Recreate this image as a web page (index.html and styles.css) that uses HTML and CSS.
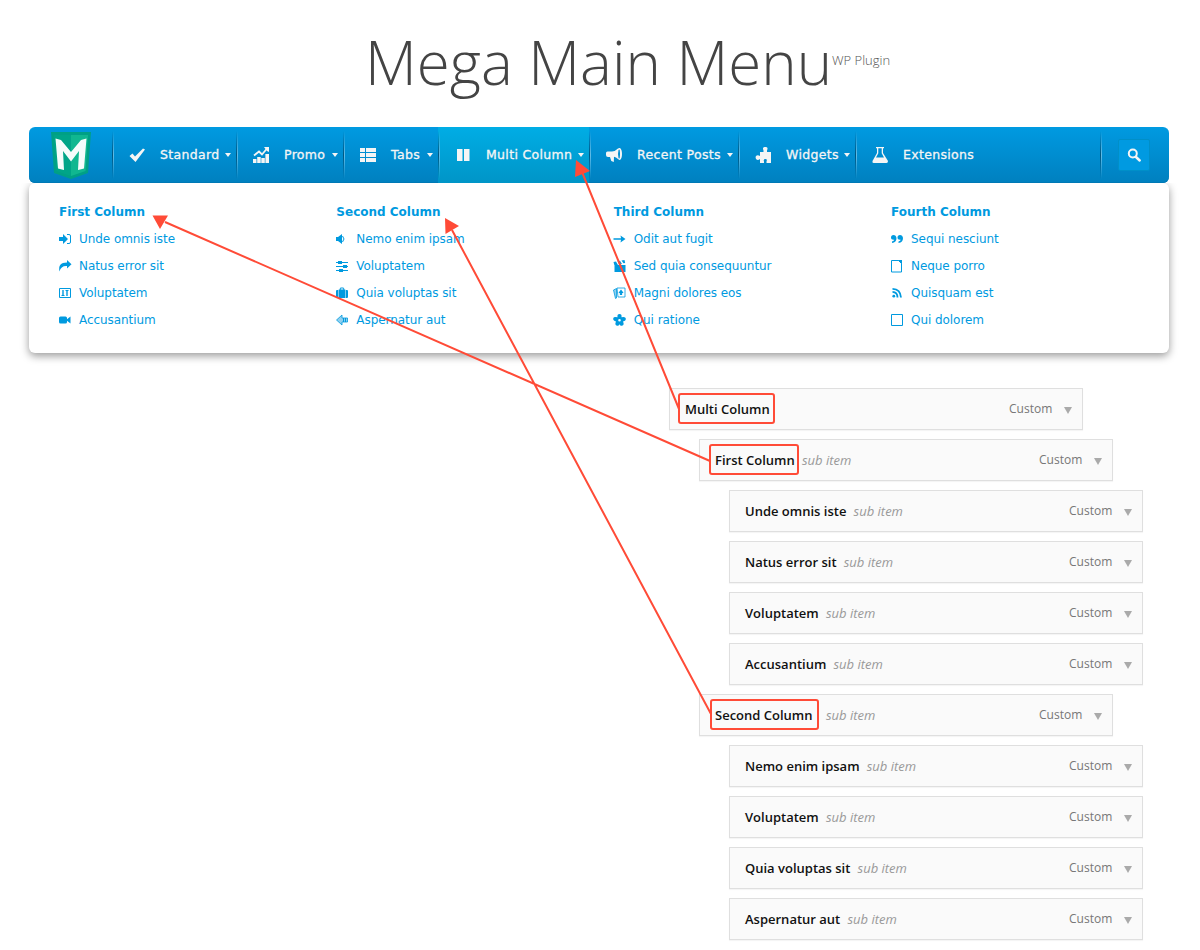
FILE: index.html
```html
<!DOCTYPE html>
<html lang="en">
<head>
<meta charset="utf-8">
<title>Mega Main Menu</title>
<link rel="stylesheet" href="styles.css">
</head>
<body>
<main class="page">
<header class="title"><h1>Mega Main Menu</h1><span class="tag">WP Plugin</span></header>
<nav class="nav">
<a class="logo"><svg width="40" height="48" viewBox="0 0 40 48"><path fill="#00a085" d="M0 0h40l-3 41-17 6-17-6z"/><path fill="#10b790" d="M20 3h17l-2.500 36L20 44z"/><path fill="#00a588" d="M3 3h17v41L5.500 39z"/><path fill="#f5fcfb" d="M4.500 6.500L10 8l10 12L30 8l5.500-1.500L33 36.500l-6 1.500 1-19-8 10.500L12 19l1 19-6-1.500z"/></svg></a>
<a class="item w-standard"><svg class="ico" viewBox="0 0 16 16"><path d="M.5 9l3-2.500L6 9.500 14 1.500l2 1L6.500 15z"/></svg><span>Standard</span><i class="caret"></i></a>
<a class="item w-promo"><svg class="ico" viewBox="0 0 16 16"><path d="M0 12h3.500v4H0zM4.200 10h3.500v6H4.200zM8.300 11h3.500v5H8.300zM12.400 7H16v9h-3.600z"/><path class="line" d="M1 8.500l5-4 3 3 5-6"/><path d="M11 0h5v5l-2-1z"/></svg><span>Promo</span><i class="caret"></i></a>
<a class="item w-tabs"><svg class="ico" viewBox="0 0 16 16"><path d="M0 1h5v4H0zM6 1h10v4H6zM0 6h5v4H0zM6 6h10v4H6zM0 11h5v4H0zM6 11h10v4H6z"/></svg><span>Tabs</span><i class="caret"></i></a>
<a class="item w-multi active"><svg class="ico" viewBox="0 0 16 16"><path d="M2 2h5.500v12H2zM9 2h5.500v12H9z"/></svg><span>Multi Column</span><i class="caret"></i></a>
<a class="item w-posts"><svg class="ico" viewBox="0 0 16 16"><path fill-rule="evenodd" d="M0 6q0-1.500 1.500-1.500H6q3 0 6-3Q13 .8 14 1q2 1.500 2 6t-2 6q-1 0-2-1-2-2-4-2.300L7.800 15 5.300 14 4 10H2Q0 10 0 8zM12.500 3q-1 4 0 8 .700 1 1.200 0 .8-4 0-8-.5-1-1.200 0z"/></svg><span>Recent Posts</span><i class="caret"></i></a>
<a class="item w-widgets"><svg class="ico" viewBox="0 0 16 16"><path d="M5 5h3.500V3.500Q7 .5 9.500 0h1.500Q13.500.5 12 3.500V5h4v11h-4.500v-1.500Q12.500 12 10.500 12 8 12 9 14.500V16H5v-4Q3 13.500 1.500 12.500 0 11 1 9q1.500-1.500 4 0z"/></svg><span>Widgets</span><i class="caret"></i></a>
<a class="item w-ext"><svg class="ico" viewBox="0 0 16 16"><path fill-rule="evenodd" d="M4 0h8v1.200h-1V6l5 8q0 2-1.500 2h-13Q0 16 .5 14L5 6V1.200H4zM6.300 1.200v5L4 10.500h8L9.700 6.200v-5z"/></svg><span>Extensions</span></a>
<div class="search"><a class="search-btn"><svg width="16" height="16" viewBox="0 0 16 16"><circle cx="6.800" cy="6.500" r="4" fill="none" stroke="#f5f5f5" stroke-width="2"/><path d="M10 10l3.700 3.500" stroke="#f5f5f5" stroke-width="2.500" stroke-linecap="round"/></svg></a></div>
</nav>
<section class="panel">
<div class="col"><h2>First Column</h2>
<a><svg viewBox="0 0 12 12"><path d="M0 4h4V1l5 5-5 5V8H0z"/><path class="thin" d="M8 1.500h2q1.500 0 1.500 1.500v6q0 1.500-1.500 1.500H8"/></svg>Unde omnis iste</a>
<a><svg viewBox="0 0 12 12"><path d="M.5 11.500Q-1.500 2.500 8 2.500V0l4.500 4.300L8 8.500V6Q2 5.500.5 11.500z"/></svg>Natus error sit</a>
<a><svg viewBox="0 0 12 12"><path class="thin" d="M.5 1.500h11v9H.5zM2.500 8.500h3M6.500 3.500h3"/><path d="M3.300 3h1.400v6H3.300zM7.300 3h1.400v6H7.300z"/></svg>Voluptatem</a>
<a><svg viewBox="0 0 12 12"><rect y="2.500" width="8" height="7" rx="1.500"/><path d="M7 6l4.500-3.500v7z"/></svg>Accusantium</a></div>
<div class="col"><h2>Second Column</h2>
<a><svg viewBox="0 0 12 12"><path d="M0 4h2l4-3v10L2 8H0z"/><path class="thin" d="M6.500 3q3 3 0 6"/></svg>Nemo enim ipsam</a>
<a><svg viewBox="0 0 12 12"><path class="thin" d="M0 2.500h12M0 6.500h12M0 10.500h12"/><path d="M2 1h4v3H2zM7 5h4v3H7zM3 9h4v3H3z"/></svg>Voluptatem</a>
<a><svg viewBox="0 0 12 12"><path fill-rule="evenodd" d="M2.700 2.500h1Q3.500.5 5 .5h2q1.500 0 1.300 2h1v8.500H2.700zM4.700 1.500v1h2.600v-1zM1 3h1.200v8H1Q0 11 0 10V4q0-1 1-1zM9.800 3H11q1 0 1 1v6q0 1-1 1H9.800z"/></svg>Quia voluptas sit</a>
<a><svg viewBox="0 0 12 12"><path class="soft" d="M.5 6L6 1v3h5.500v4H6v3z"/><path class="thin" d="M7.500 4v4M9.500 4v4"/></svg>Aspernatur aut</a></div>
<div class="col"><h2>Third Column</h2>
<a><svg viewBox="0 0 12 12"><path d="M0 5.300h7.500L7 2.500 12 6 7 9.500l.5-2.700H0z"/></svg>Odit aut fugit</a>
<a><svg viewBox="0 0 12 12"><path d="M1 5h11v7H1zM0 2l2.500-.5L4.500 5H.8zM4 1.200l2.500-.5 2 3.300-2.500.7zM8 .5l3-.5.7 3-1.700.3z"/></svg>Sed quia consequuntur</a>
<a><svg viewBox="0 0 12 12"><path class="soft" d="M0 3l3-1.500v9.500l-1 .5z"/><path class="card" d="M3.500 1h8v9h-7z"/><path d="M7.500 2.500l2.500 3.300-1.700.7.500 1.500h-2.600l.5-1.500L5 5.800z"/></svg>Magni dolores eos</a>
<a><svg viewBox="0 0 12 12"><path fill-rule="evenodd" d="M4 3.200Q3.500 0 6 0t2 3.200q4-1 4.300 1.200T9.500 7.500q1.500 3-.5 4T6 10.300Q5 12.500 3 11.500t-.5-4Q-.6 6.500-.3 4.400T4 3.200zM6 5a1.300 1.300 0 100 2.600A1.300 1.300 0 006 5z"/></svg>Qui ratione</a></div>
<div class="col"><h2>Fourth Column</h2>
<a><svg viewBox="0 0 12 12"><path d="M0 4.500Q0 2 2.500 2T5.500 5Q5.500 9.500 1 10V8.500q2-.5 2.300-1.800Q0 7 0 4.500zM6.500 4.500Q6.500 2 9 2t3 3q0 4.500-4.500 5V8.500q2-.5 2.300-1.800-3.300.3-3.300-2.200z"/></svg>Sequi nesciunt</a>
<a><svg viewBox="0 0 12 12"><path class="hair" d="M.5.5h7l3 3v8.500H.5z"/><path d="M6.500 0h4.500v4.500L9 2z"/></svg>Neque porro</a>
<a><svg viewBox="0 0 12 12"><circle cx="2.800" cy="9.200" r="1.400"/><path class="thick" d="M1.500 4.800q5 .3 5 5.700M1.500 1.800q8 .3 8.500 8.700"/></svg>Quisquam est</a>
<a><svg viewBox="0 0 12 12"><path class="hair" d="M.5.500h11v11H.5z"/></svg>Qui dolorem</a></div>
</section>
<section class="tree">
<div class="row"><b>Multi Column</b><span>Custom</span><i></i></div>
<div class="row d1"><b>First Column</b><em>sub item</em><span>Custom</span><i></i></div>
<div class="row d2"><b>Unde omnis iste</b><em>sub item</em><span>Custom</span><i></i></div>
<div class="row d2"><b>Natus error sit</b><em>sub item</em><span>Custom</span><i></i></div>
<div class="row d2"><b>Voluptatem</b><em>sub item</em><span>Custom</span><i></i></div>
<div class="row d2"><b>Accusantium</b><em>sub item</em><span>Custom</span><i></i></div>
<div class="row d1 wide"><b>Second Column</b><em>sub item</em><span>Custom</span><i></i></div>
<div class="row d2"><b>Nemo enim ipsam</b><em>sub item</em><span>Custom</span><i></i></div>
<div class="row d2"><b>Voluptatem</b><em>sub item</em><span>Custom</span><i></i></div>
<div class="row d2"><b>Quia voluptas sit</b><em>sub item</em><span>Custom</span><i></i></div>
<div class="row d2"><b>Aspernatur aut</b><em>sub item</em><span>Custom</span><i></i></div>
</section>
<svg class="marks" width="1200" height="950" viewBox="0 0 1200 950">
<g fill="none" stroke="#ff4b37" stroke-width="2"><rect x="679" y="394" width="95" height="29" rx="2"/><rect x="710" y="445" width="88" height="29" rx="2"/><rect x="711" y="700" width="107" height="29" rx="2"/><path d="M679 409L582 172M710 461L165 222M711 714L452 230"/></g>
<path fill="#ff4b37" d="M576 160l14 11-15 6zM152.500 215.500h15.500l-8 13.500zM445 218l14 8-13.500 8z"/>
</svg>
</main>
</body>
</html>
```
FILE: styles.css
```css
* { box-sizing: border-box; }
body { margin: 0; background: #fff; font-family: "DejaVu Sans", Verdana, sans-serif; }
.page { position: relative; width: 1200px; height: 950px; overflow: hidden; padding: 0 31px 0 29px; }
.title { height: 127px; padding: 21px 0 0 336px; display: flex; align-items: flex-start; font-family: "Open Sans", sans-serif; font-weight: 300; white-space: nowrap; }
.title h1 { margin: 0; width: 467px; font-size: 60px; line-height: 82px; font-weight: 300; color: #444; }
.tag { font-size: 13px; line-height: 18px; margin-top: 30px; color: #555; }
.nav { height: 56px; display: flex; border-radius: 6px; background: linear-gradient(#009ae1, #0080bf); overflow: hidden; color: #f5f5f5; box-shadow: inset 0 -1px #0079b5; }
.logo { width: 83px; padding: 5px 0 0 22px; }
.item { position: relative; display: flex; align-items: center; padding: 0 5px 0 17px; font-size: 12.5px; letter-spacing: .33px; white-space: nowrap; -webkit-text-stroke: .3px #f5f5f5; }
.item span { position: relative; top: -1px; }
.item::before, .search::before { content: ""; position: absolute; left: 0; top: 4px; height: 48px; width: 2px; background: linear-gradient(90deg, #005680 50%, #62bce6 50%); -webkit-mask: linear-gradient(transparent, #000 50%, transparent); mask: linear-gradient(transparent, #000 50%, transparent); }
.active { background: linear-gradient(#00ade5, #0095c7); }
.ico { width: 16px; height: 16px; margin-right: 15px; fill: #f5f5f5; flex: none; }
.line { fill: none; stroke: #f5f5f5; stroke-width: 1.8; }
.caret { margin-left: auto; border: 3.5px solid transparent; border-width: 4px 3.5px 0; border-top-color: #f5f5f5; }
.w-standard { width: 124px; }
.w-promo { width: 107px; }
.w-tabs { width: 95px; }
.w-multi { width: 151px; }
.w-posts { width: 149px; }
.w-widgets { width: 117px; }
.w-ext { width: 245px; }
.search { position: relative; padding: 12px 0 0 18px; }
.search-btn { width: 32px; height: 32px; display: flex; align-items: center; justify-content: center; border: 1px solid #008fc8; border-radius: 2px; background: #009ae1; }
.panel { height: 170px; padding: 20px 0 0 30px; display: grid; grid-template-columns: repeat(4, 277.35px); align-content: start; border-radius: 6px; box-shadow: 0 3px 9px rgba(0,0,0,.4); color: #009adf; clip-path: inset(0 -20px -20px -20px); }
.col h2 { margin: 0 0 3px; font-size: 12px; line-height: 19px; font-weight: bold; }
.col a { display: flex; align-items: center; height: 27px; font-size: 12px; letter-spacing: -.06px; white-space: nowrap; }
.col svg { width: 12px; height: 12px; margin: 0 8px 0 0; fill: #009adf; overflow: visible; }
.col:nth-child(3) svg { transform: translateX(-.5px); }
.col .thin, .col .thick, .col .hair { fill: none; stroke: #009adf; stroke-width: 1; }
.col .thick { stroke-width: 1.8; }
.col .soft { fill: #8fcfee; stroke: #009adf; stroke-width: .8; }
.col .card { fill: #fff; stroke: #009adf; stroke-width: .8; }
.tree { padding: 35px 0 0 640px; display: flex; flex-direction: column; gap: 9px; }
.row { width: 414px; height: 42px; flex: none; display: flex; align-items: center; padding: 0 10px 0 15px; border: 1px solid #dfdfdf; background: #fafafa; box-shadow: 0 1px 1px rgba(0,0,0,.04); font: 13px "Open Sans", sans-serif; white-space: nowrap; }
.d1 { margin-left: 30px; }
.d2 { margin-left: 60px; }
.row b { font-weight: 600; color: #111; }
.row em { margin-left: 7.2px; color: #999; }
.wide em { margin-left: 13.5px; }
.row span { margin: -2px 0 0 auto; font-size: 12px; letter-spacing: .04px; color: #777; }
.row i { margin: 2px 0 0 11.5px; border: 4.5px solid transparent; border-top: 7px solid #aaa; border-bottom: 0; }
.marks { position: absolute; left: 0; top: 0; pointer-events: none; }
```
